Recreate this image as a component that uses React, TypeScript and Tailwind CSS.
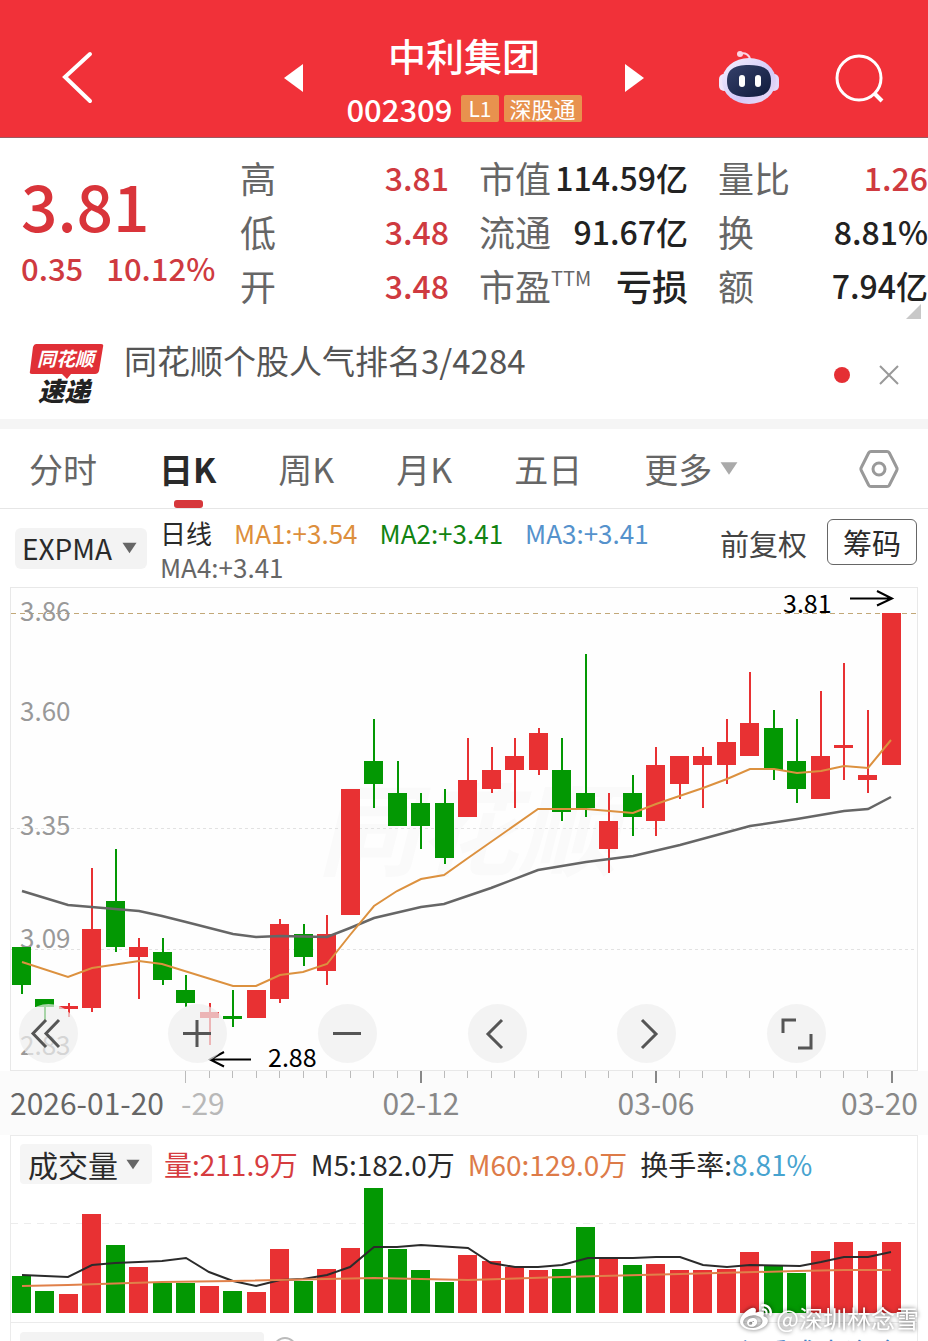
import type { ReactNode } from 'react';
import { FaWeibo } from 'react-icons/fa';

const UP = '#e83133';
const DOWN = '#039803';

type Candle = {
  up: boolean;
  high: number;
  top: number;
  bottom: number;
  low: number;
  volume: number;
};

// [direction, high, body top, body bottom, low, volume bar top]
const rows: [string, number, number, number, number, number][] = [
  ['d', 947, 947, 985, 994, 1276],
  ['d', 999, 999, 1007, 1021, 1291],
  ['u', 1003, 1006, 1009, 1017, 1294],
  ['u', 868, 929, 1008, 1012, 1214],
  ['d', 849, 901, 947, 952, 1245],
  ['u', 938, 947, 957, 999, 1267],
  ['d', 938, 952, 980, 985, 1283],
  ['d', 975, 990, 1003, 1007, 1283],
  ['u', 1003, 1012, 1018, 1045, 1286],
  ['d', 990, 1016, 1019, 1027, 1291],
  ['u', 990, 990, 1018, 1018, 1292],
  ['u', 919, 924, 999, 1003, 1249],
  ['d', 924, 934, 957, 966, 1281],
  ['u', 915, 934, 971, 985, 1269],
  ['u', 789, 789, 915, 915, 1248],
  ['d', 719, 761, 784, 808, 1188],
  ['d', 761, 793, 826, 826, 1249],
  ['d', 793, 803, 826, 849, 1270],
  ['d', 789, 803, 858, 864, 1282],
  ['u', 738, 780, 817, 817, 1255],
  ['u', 747, 770, 789, 793, 1261],
  ['u', 738, 756, 770, 808, 1267],
  ['u', 728, 733, 770, 775, 1270],
  ['d', 738, 770, 812, 821, 1269],
  ['d', 654, 793, 808, 817, 1227],
  ['u', 793, 821, 849, 873, 1259],
  ['d', 775, 793, 817, 836, 1265],
  ['u', 747, 765, 821, 836, 1264],
  ['u', 756, 756, 784, 799, 1270],
  ['u', 747, 756, 765, 808, 1270],
  ['u', 719, 742, 765, 784, 1269],
  ['u', 672, 723, 756, 756, 1252],
  ['d', 710, 728, 770, 780, 1265],
  ['d', 719, 761, 789, 803, 1273],
  ['u', 691, 756, 799, 799, 1251],
  ['u', 663, 745, 748, 780, 1242],
  ['u', 710, 775, 780, 793, 1251],
  ['u', 613, 613, 765, 765, 1242],
];

const candles: Candle[] = rows.map(([dir, high, top, bottom, low, volume]) => ({
  up: dir === 'u',
  high,
  top,
  bottom,
  low,
  volume,
}));

const xOf = (i: number) => Math.round(21.5 + (i * 870) / 37);

const shortMa =
  '22,962 68,977 92,968 139,961 162,964 233,986 256,986 280,975 303,972 327,964 350,935 374,906 397,891 421,879 444,875 468,858 538,809 586,809 633,813 656,804 703,788 727,779 750,769 774,769 797,773 821,771 844,766 868,768 891,740';
const longMa =
  '22,891 68,905 115,909 139,911 162,916 186,922 233,934 256,937 280,936 327,937 350,928 374,918 421,907 444,904 491,888 538,870 586,862 633,856 680,845 750,826 797,819 844,811 868,809 891,797';
const volM5 =
  '22,1275 68,1277 92,1265 115,1263 162,1261 186,1258 209,1272 233,1281 256,1286 280,1280 303,1279 327,1275 350,1267 374,1247 397,1247 421,1245 468,1248 491,1263 515,1267 538,1267 562,1265 588,1258 633,1258 656,1257 680,1257 703,1265 727,1267 750,1265 800,1266 821,1262 844,1257 868,1257 891,1252';
const volM60 = '22,1286 68,1285 162,1282 233,1281 374,1278 468,1280 562,1277 680,1274 797,1271 844,1270 891,1270';

const priceLabels = [
  { text: '3.86', y: 621 },
  { text: '3.60', y: 721 },
  { text: '3.35', y: 835 },
  { text: '3.09', y: 948 },
  { text: '2.83', y: 1055 },
];

const tabs = ['分时', '日K', '周K', '月K', '五日'];

function Caret({ className }: { className: string }) {
  return (
    <svg viewBox="0 0 16 12" className={className} aria-hidden="true">
      <path d="M0.5 0.5h15L8 11.5z" fill="currentColor" />
    </svg>
  );
}

function Robot() {
  return (
    <svg viewBox="0 0 60 56" className="h-[56px] w-[60px]" aria-hidden="true">
      <defs>
        <linearGradient id="shell" x1="0" y1="0" x2="1" y2="1">
          <stop offset="0" stopColor="#f6f1ff" />
          <stop offset="0.6" stopColor="#d3caf8" />
          <stop offset="1" stopColor="#efdcf3" />
        </linearGradient>
        <linearGradient id="visor" x1="0" y1="0" x2="1" y2="1">
          <stop offset="0" stopColor="#35406a" />
          <stop offset="1" stopColor="#0f1b3c" />
        </linearGradient>
      </defs>
      <path d="M21 4c5-2 10 1 10 6" fill="none" stroke="#fbd5e4" strokeWidth="2" />
      <circle cx="21" cy="4" r="3" fill="#fbd5e4" />
      <rect x="0" y="24" width="10" height="17" rx="5" fill="#f1e6fb" />
      <rect x="50" y="24" width="10" height="17" rx="5" fill="#e3d8fa" />
      <ellipse cx="30" cy="31" rx="27" ry="23" fill="url(#shell)" />
      <path
        d="M30 15c16 0 22 5 22 16s-6 16-22 16S8 42 8 31s6-16 22-16z"
        fill="url(#visor)"
      />
      <rect x="20" y="25" width="6" height="12" rx="3" fill="#fff" />
      <rect x="36" y="25" width="6" height="12" rx="3" fill="#fff" />
    </svg>
  );
}

function Header() {
  return (
    <header className="grid h-[138px] grid-cols-[1fr_auto_1fr] items-center border-b border-[#9c5a62] bg-[#f13139] pt-[18px] text-white">
      <button type="button" aria-label="返回" className="ml-[60px] w-[34px]">
        <svg viewBox="0 0 34 54" className="h-[54px] w-[34px]" fill="none" stroke="currentColor" strokeWidth="4">
          <path d="M30 3 5 26l25 24" strokeLinecap="round" />
        </svg>
      </button>
      <div className="flex w-[360px] items-center justify-between">
        <button type="button" aria-label="上一只">
          <svg viewBox="0 0 19 28" className="h-[28px] w-[19px]">
            <path d="M19 0v28L0 14z" fill="currentColor" />
          </svg>
        </button>
        <div className="flex flex-col items-center pt-[6px]">
          <h1 className="text-[38px] leading-[52px] font-medium">中利集团</h1>
          <div className="mt-[4px] flex h-[48px] items-center gap-[5px]">
            <span className="pr-[4px] text-[31px] leading-[44px] font-medium">002309</span>
            <span className="rounded-xs bg-[#e8924e] px-[7px] text-[21px] leading-[27px]">L1</span>
            <span className="rounded-xs bg-[#e8924e] px-[6px] text-[22px] leading-[27px]">深股通</span>
          </div>
        </div>
        <button type="button" aria-label="下一只">
          <svg viewBox="0 0 19 28" className="h-[28px] w-[19px]">
            <path d="M0 0v28l19-14z" fill="currentColor" />
          </svg>
        </button>
      </div>
      <div className="flex items-center justify-end gap-[55px] pr-[44px]">
        <button type="button" aria-label="智能助手">
          <Robot />
        </button>
        <button type="button" aria-label="搜索">
          <svg viewBox="0 0 50 50" className="h-[50px] w-[50px]" fill="none" stroke="currentColor" strokeWidth="3">
            <circle cx="25" cy="25" r="22" />
            <path d="m40 40 8 8" strokeWidth="4" />
          </svg>
        </button>
      </div>
    </header>
  );
}

function Stat({ label, value, red = false }: { label: ReactNode; value: ReactNode; red?: boolean }) {
  return (
    <div className="flex h-[54px] items-center justify-between whitespace-nowrap">
      <dt className="flex text-[36px] text-[#666]">{label}</dt>
      <dd className={red ? 'text-[32px] font-medium text-[#cf3a40]' : 'text-[32px] font-medium text-[#222]'}>
        {value}
      </dd>
    </div>
  );
}

function Quote() {
  return (
    <section className="relative grid grid-cols-[240fr_239fr_239fr_210fr] pt-[12px] pb-[18px]">
      <div className="pt-[10px] pl-[21px] text-[#cf3a40]">
        <p className="text-[64px] leading-[88px] font-medium text-[#d9343a]">3.81</p>
        <p className="flex gap-[23px] text-[31px] leading-[40px] font-medium">
          <span>0.35</span>
          <span>10.12%</span>
        </p>
      </div>
      <dl className="pr-[30px]">
        <Stat label="高" value="3.81" red />
        <Stat label="低" value="3.48" red />
        <Stat label="开" value="3.48" red />
      </dl>
      <dl className="pr-[30px]">
        <Stat label="市值" value="114.59亿" />
        <Stat label="流通" value="91.67亿" />
        <Stat
          label={
            <>
              市盈<sup className="top-0 text-[20px] leading-[40px]">TTM</sup>
            </>
          }
          value={<span className="text-[36px]">亏损</span>}
        />
      </dl>
      <dl>
        <Stat label="量比" value="1.26" red />
        <Stat label="换" value="8.81%" />
        <Stat label="额" value="7.94亿" />
      </dl>
      <svg viewBox="0 0 15 15" className="absolute right-[7px] bottom-[11px] h-[15px] w-[15px]" aria-hidden="true">
        <path d="M15 0v15H0z" fill="#c8c8c8" />
      </svg>
    </section>
  );
}

function NewsBar() {
  return (
    <section className="flex h-[87px] items-start pr-[28px] pl-[29px]">
      <svg
        viewBox="0 0 76 72"
        className="mt-[10px] h-[72px] w-[76px] overflow-visible"
        role="img"
        aria-label="同花顺速递"
      >
        <path d="M7 2h65q3 0 2 3l-4 24q-1 3-4 3H42l-4 5-5-5H3q-3 0-2-3l3-24q1-3 3-3z" fill="#e02f36" />
        <text x="8" y="24" fontSize="19" fontWeight="700" fontStyle="italic" fill="#fff">
          同花顺
        </text>
        <text x="9" y="59" fontSize="26" fontWeight="900" fontStyle="italic" fill="#222">
          速递
        </text>
      </svg>
      <a href="#news" className="mt-[3px] ml-[19px] text-[33px] leading-[50px] text-[#555]">
        同花顺个股人气排名3/4284
      </a>
      <div className="mt-[32px] ml-auto flex items-center gap-[28px]">
        <span className="h-[16px] w-[16px] rounded-full bg-[#e52f34]" />
        <button type="button" aria-label="关闭">
          <svg viewBox="0 0 22 22" className="h-[22px] w-[22px]" stroke="#999" strokeWidth="2">
            <path d="m2 2 18 18M20 2 2 20" />
          </svg>
        </button>
      </div>
    </section>
  );
}

function TabBar() {
  return (
    <nav className="flex h-[80px] items-center border-b border-[#e6e6e6] pr-[29px] pl-[29px]">
      <div className="flex h-full gap-[62px] text-[34px] text-[#666]">
        {tabs.map((tab) =>
          tab === '日K' ? (
            <button key={tab} type="button" className="relative font-bold text-[#2a2a2a]">
              {tab}
              <span className="absolute bottom-0 left-[15px] h-[8px] w-[29px] rounded-[3px] bg-[#d6373b]" />
            </button>
          ) : (
            <button key={tab} type="button">
              {tab}
            </button>
          )
        )}
        <button type="button" aria-haspopup="menu" className="flex items-center gap-[8px]">
          更多
          <Caret className="h-[15px] w-[18px] text-[#aaa]" />
        </button>
      </div>
      <button type="button" aria-label="设置" className="ml-auto">
        <svg viewBox="0 0 40 40" className="h-[40px] w-[40px]" fill="none" stroke="#999" strokeWidth="3">
          <path d="M12 2.5h16q1.500 0 2.300 1.300l7.400 14.700q.8 1.500 0 3l-7.400 14.700q-.8 1.300-2.300 1.300H12q-1.500 0-2.300-1.300L2.300 21.500q-.8-1.500 0-3L9.700 3.800Q10.500 2.500 12 2.500z" />
          <circle cx="20" cy="20" r="6" />
        </svg>
      </button>
    </nav>
  );
}

function IndicatorBar() {
  return (
    <section className="flex h-[78px] items-start pr-[11px] pl-[15px]">
      <div className="relative mt-[19px]">
        <select
          aria-label="指标"
          className="h-[41px] w-[132px] appearance-none rounded-[6px] bg-[#f3f3f3] pl-[7px] text-[28px] leading-[41px] text-[#2a2a2a]"
        >
          <option>EXPMA</option>
        </select>
        <Caret className="pointer-events-none absolute top-[14px] right-[10px] h-[12px] w-[15px] text-[#666]" />
      </div>
      <div className="mt-[7px] ml-[13px] flex flex-1 flex-wrap gap-x-[22px] text-[26px] leading-[34px]">
        <span className="text-[#2a2a2a]">日线</span>
        <span className="text-[#dd8f3c]">MA1:+3.54</span>
        <span className="text-[#128312]">MA2:+3.41</span>
        <span className="text-[#5592cc]">MA3:+3.41</span>
        <span className="text-[#666]">MA4:+3.41</span>
      </div>
      <button type="button" className="mt-[13px] text-[29px] leading-[42px] text-[#444]">
        前复权
      </button>
      <button
        type="button"
        className="mt-[10px] ml-[20px] h-[46px] w-[90px] rounded-[6px] border border-[#666] text-[29px] leading-[44px] text-[#2a2a2a]"
      >
        筹码
      </button>
    </section>
  );
}

function RoundButton({ label, children }: { label: string; children: ReactNode }) {
  return (
    <button type="button" aria-label={label} className="h-[59px] w-[59px] rounded-full bg-[#eeeeee]/70">
      <svg viewBox="0 0 59 59" className="h-full w-full" fill="none" stroke="#555" strokeWidth="3">
        {children}
      </svg>
    </button>
  );
}

function PriceChart() {
  return (
    <section className="relative">
      <svg viewBox="0 587 928 548" className="block w-full overflow-visible" role="img" aria-label="日K线图">
        <rect x="0" y="1071" width="928" height="64" fill="#fbfbfb" />
        <rect x="10.5" y="587.5" width="907" height="483" fill="#fefefe" stroke="#e8e8e8" />
        <text x="318" y="868" fontSize="100" fontWeight="700" fontStyle="italic" fill="#fafafa">
          同花顺
        </text>
        <path d="M11 828.500h906M11 949.500h906" stroke="#e2e2e2" strokeDasharray="3 3" />
        <path d="M11 613.500h906" stroke="#c2a878" strokeDasharray="5 4" />
        {priceLabels.map((label) => (
          <text key={label.text} x="20" y={label.y} fontSize="26" fill="#999">
            {label.text}
          </text>
        ))}
        {candles.map((c, i) => (
          <g key={i} fill={c.up ? UP : DOWN}>
            <rect x={xOf(i) - 1} y={c.high} width="2" height={c.low - c.high} />
            <rect x={xOf(i) - 10} y={c.top} width="19" height={c.bottom - c.top} />
          </g>
        ))}
        <polyline points={longMa} fill="none" stroke="#666" strokeWidth="2.500" />
        <polyline points={shortMa} fill="none" stroke="#dc913f" strokeWidth="2" />

        {/* High and low markers */}
        <g fontSize="25" fill="#000">
          <text x="783" y="613">
            3.81
          </text>
          <text x="268" y="1067">
            2.88
          </text>
        </g>
        <path
          d="M850 598.500h40M877 591l15 7.500-15 7M251 1059.500h-39M224 1052l-14 7.500 14 7"
          fill="none"
          stroke="#000"
          strokeWidth="2"
        />

        {/* Date axis */}
        {candles.map((_, i) => {
          if (i < 7) return null;
          const major = i % 10 === 7;
          return (
            <rect
              key={i}
              x={xOf(i) - 1}
              y="1071"
              width={major && i > 7 ? 2 : 1}
              height={major ? 12 : 7}
              fill={major && i > 7 ? '#888' : '#bbb'}
            />
          );
        })}
        <g fontSize="30" fill="#888">
          <text x="10" y="1115" fill="#666">
            2026-01-20
          </text>
          <text x="181" y="1115" fill="#b8b8b8">
            -29
          </text>
          <text x="421" y="1115" textAnchor="middle">
            02-12
          </text>
          <text x="656" y="1115" textAnchor="middle">
            03-06
          </text>
          <text x="918" y="1115" textAnchor="end">
            03-20
          </text>
        </g>
      </svg>
      <div className="absolute right-[11%] bottom-[72px] left-[2%] flex justify-between">
        <RoundButton label="最早">
          <path d="M27 16 14 29.500l13 13.500M40 16 27 29.500l13 13.500" />
        </RoundButton>
        <RoundButton label="放大">
          <path d="M29 16v27M15 29.500h28" />
        </RoundButton>
        <RoundButton label="缩小">
          <path d="M15 29.500h28" />
        </RoundButton>
        <RoundButton label="左移">
          <path d="M34 16 20 30l14 14" />
        </RoundButton>
        <RoundButton label="右移">
          <path d="M25 16l14 14-14 14" />
        </RoundButton>
        <RoundButton label="全屏">
          <path d="M16 29V16h13M44 30v14H31" />
        </RoundButton>
      </div>
    </section>
  );
}

function VolumeChart() {
  return (
    <section className="mx-[10px] border border-[#ebebeb] pb-[9px]">
      <div className="flex h-[50px] items-end gap-[12px] pl-[9px]">
        <div className="relative h-[42px]">
          <select
            aria-label="副图指标"
            className="h-[40px] w-[132px] appearance-none rounded-[4px] bg-[#f5f5f5] pl-[8px] text-[30px] leading-[40px] text-[#2a2a2a]"
          >
            <option>成交量</option>
          </select>
          <Caret className="pointer-events-none absolute top-[15px] right-[12px] h-[11px] w-[14px] text-[#666]" />
        </div>
        <div className="flex gap-[13px] pb-[2px] text-[28px] leading-[40px] whitespace-nowrap text-[#2a2a2a]">
          <span className="text-[#d63c40]">量:211.9万</span>
          <span>M5:182.0万</span>
          <span className="text-[#dd7b48]">M60:129.0万</span>
          <span>
            换手率:<span className="text-[#47a3cf]">8.81%</span>
          </span>
        </div>
      </div>
      <svg viewBox="11 1186 906 127" className="block w-full" role="img" aria-label="成交量柱状图">
        <path d="M11 1223.500h906" stroke="#ececec" strokeDasharray="7 6" />
        {candles.map((c, i) => (
          <rect
            key={i}
            x={xOf(i) - 10}
            y={c.volume}
            width="19"
            height={1313 - c.volume}
            fill={c.up ? UP : DOWN}
          />
        ))}
        <polyline points={volM5} fill="none" stroke="#2b2b2b" strokeWidth="2" />
        <polyline points={volM60} fill="none" stroke="#e0804a" strokeWidth="2" />
      </svg>
    </section>
  );
}

// Only the top edge of the next indicator panel shows
function NextPanel() {
  return (
    <section className="mx-[10px] flex h-[18px] items-start overflow-hidden border-x border-[#ebebeb] pr-[16px] pl-[9px]">
      <div className="mt-[9px] h-[40px] w-[244px] rounded-[4px] bg-[#f3f3f3]" />
      <span className="mt-[14px] ml-[9px] h-[24px] w-[24px] rounded-full border-2 border-[#bbb]" />
      <a href="#fund" className="mt-[9px] ml-auto text-[28px] leading-[40px] text-[#3f7fc4]">
        主看成本资金
      </a>
    </section>
  );
}

export default function App() {
  return (
    <main className="relative w-full overflow-hidden bg-white font-['Noto_Sans_CJK_SC',sans-serif]">
      <Header />
      <Quote />
      <div className="pt-[2px]">
        <NewsBar />
      </div>
      <div className="h-[10px] bg-[#f5f5f5]" />
      <TabBar />
      <IndicatorBar />
      <PriceChart />
      <VolumeChart />
      <NextPanel />
      <div className="absolute right-[9px] bottom-[6px] flex items-center gap-[4px] text-[24px] leading-[34px] text-white drop-shadow-[0_0_2px_rgba(0,0,0,0.65)]">
        <FaWeibo className="h-[32px] w-[32px]" />
        <span>@深圳林念雪</span>
      </div>
    </main>
  );
}
